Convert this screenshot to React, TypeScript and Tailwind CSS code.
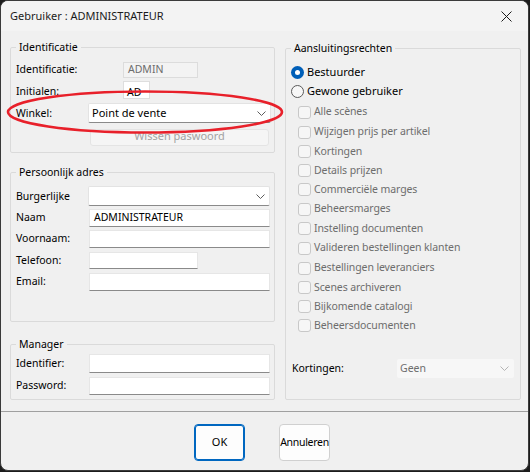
import React from "react";

const Chevron = ({ light }: { light?: boolean }) => (
	<svg width="9" height="5" viewBox="0 0 9 5" className={light ? "text-[#b4b4b4]" : "text-[#5c5c5c]"}>
		<path d="M0.5 0.5 L4.5 4.5 L8.5 0.5" fill="none" stroke="currentColor" strokeWidth="1" />
	</svg>
);

const TextBox = ({ cls, value }: { cls: string; value?: string }) => (
	<div className={`${cls} h-full bg-white border border-[#e6e6e6] border-b-[#8a8a8a] pl-[4px] flex items-center text-black`}>
		{value}
	</div>
);

const Combo = ({ cls, value }: { cls: string; value?: string }) => (
	<div className={`${cls} h-full bg-white border border-[#e3e3e3] border-b-[#8a8a8a] rounded-[2px] pl-[3px] pr-[4px] flex items-center justify-between text-black`}>
		<span className="text-[11px]">{value}</span>
		<Chevron />
	</div>
);

const Check = ({ label }: { label: string }) => (
	<div className="flex items-center gap-[3px] h-full">
		<div className="w-[13px] h-[13px] rounded-[3px] border border-[#c8c8c8] bg-[#f6f6f6]" />
		<span className="text-[#6d6d6d] tracking-[-0.1px]">{label}</span>
	</div>
);

const rights: [string, string][] = [
	["Alle scènes", "h-[20px]"],
	["Wijzigen prijs per artikel", "h-[20px]"],
	["Kortingen", "h-[19px]"],
	["Details prijzen", "h-[19px]"],
	["Commerciële marges", "h-[19px]"],
	["Beheersmarges", "h-[20px]"],
	["Instelling documenten", "h-[19px]"],
	["Valideren bestellingen klanten", "h-[20px]"],
	["Bestellingen leveranciers", "h-[20px]"],
	["Scenes archiveren", "h-[19px]"],
	["Bijkomende catalogi", "h-[19px]"],
	["Beheersdocumenten", "h-[19px]"],
];

const App = () => {
	return (
		<div className="relative w-[530px] h-[472px] bg-[#1c1c1c] font-['Noto_Sans',sans-serif] text-[10.5px] text-black">
			<div className="w-[529px] h-[471px] rounded-[8px] border border-[#3a3a3a] bg-[#f0f0f0] overflow-hidden flex flex-col">
				{/* title bar */}
				<header className="h-[30px] shrink-0 bg-[#f3f3f3] flex items-center justify-between pl-[9px] pr-[16px]">
					<span className="text-[11px] text-[#1b1b1b]">Gebruiker : ADMINISTRATEUR</span>
					<svg width="11" height="11" viewBox="0 0 11 11" className="mt-[1px]">
						<path d="M0.5 0.5 L10.5 10.5 M10.5 0.5 L0.5 10.5" stroke="#1b1b1b" strokeWidth="1" />
					</svg>
				</header>

				<div className="h-[380px] shrink-0 flex gap-[10px] pl-[9px] pt-[8px]">
					{/* left column */}
					<div className="w-[265px] flex flex-col">
						<fieldset className="h-[114px] border border-[#dadada] rounded-[2px]">
							<legend className="ml-[5px] px-[3px] leading-[16px]">Identificatie</legend>
							<div className="pl-[5px]">
								<div className="mt-[7px] h-[16px] flex items-center">
									<span className="w-[107px]">Identificatie:</span>
									<div className="w-[75px] h-full border border-[#dcdcdc] bg-[#f3f3f3] pl-[4px] flex items-center text-[#6d6d6d]">ADMIN</div>
								</div>
								<div className="mt-[3px] h-[18px] flex items-center">
									<span className="w-[107px] pt-[3px]">Initialen:</span>
									<div className="w-[27px] h-full bg-white border border-[#dedede] pl-[3px] overflow-hidden">
										<span className="block leading-[16px] mt-[2px]">AD</span>
									</div>
								</div>
								<div className="mt-[4px] h-[20px] flex items-center">
									<span className="w-[72px] pt-[2px]">Winkel:</span>
									<Combo cls="w-[183px]" value="Point de vente" />
								</div>
								<div className="mt-[6px] h-[17px] ml-[74px] w-[179px] border border-[#e4e4e4] rounded-[3px] bg-[#f5f5f5] overflow-hidden">
									<div className="mt-[2px] h-[13px] overflow-hidden text-center text-[#a3a3a3] text-[11px]">
										<span className="block leading-[16px] -mt-[4px]">Wissen paswoord</span>
									</div>
								</div>
							</div>
						</fieldset>

						<fieldset className="mt-[11px] h-[158px] border border-[#dadada] rounded-[2px]">
							<legend className="ml-[5px] px-[3px] leading-[16px]">Persoonlijk adres</legend>
							<div className="pl-[5px]">
								<div className="mt-[6px] h-[20px] flex items-center">
									<span className="w-[72px] pt-[2px]">Burgerlijke</span>
									<Combo cls="w-[182px]" />
								</div>
								<div className="mt-[3px] h-[18px] flex items-center">
									<span className="w-[73px]">Naam</span>
									<TextBox cls="w-[181px]" value="ADMINISTRATEUR" />
								</div>
								<div className="mt-[3px] h-[18px] flex items-center">
									<span className="w-[73px]">Voornaam:</span>
									<TextBox cls="w-[181px]" />
								</div>
								<div className="mt-[4px] h-[17px] flex items-center">
									<span className="w-[73px]">Telefoon:</span>
									<TextBox cls="w-[109px]" />
								</div>
								<div className="mt-[4px] h-[18px] flex items-center">
									<span className="w-[73px]">Email:</span>
									<TextBox cls="w-[181px]" />
								</div>
							</div>
						</fieldset>

						<fieldset className="mt-[14px] h-[64px] border border-[#dadada] rounded-[2px]">
							<legend className="ml-[5px] px-[3px] leading-[16px]">Manager</legend>
							<div className="pl-[5px]">
								<div className="mt-[2px] h-[19px] flex items-center">
									<span className="w-[73px]">Identifier:</span>
									<TextBox cls="w-[181px]" />
								</div>
								<div className="mt-[4px] h-[18px] flex items-center">
									<span className="w-[73px]">Password:</span>
									<TextBox cls="w-[181px]" />
								</div>
							</div>
						</fieldset>
					</div>

					{/* right column */}
					<fieldset className="mt-[1px] w-[236px] h-[360px] border border-[#dadada] rounded-[2px]">
						<legend className="ml-[5px] px-[3px] leading-[16px]">Aansluitingsrechten</legend>
						<div className="pl-[5px]">
							<div className="mt-[8px] h-[16px] flex items-center gap-[3px]">
								<div className="w-[13px] h-[13px] rounded-full bg-[#005fb8] flex items-center justify-center">
									<div className="w-[5px] h-[5px] rounded-full bg-white" />
								</div>
								<span className="text-[11px]">Bestuurder</span>
							</div>
							<div className="mt-[3px] h-[16px] flex items-center gap-[3px]">
								<div className="w-[13px] h-[13px] rounded-full border border-[#5a5a5a] bg-[#f7f7f7]" />
								<span className="text-[11px]">Gewone gebruiker</span>
							</div>
							<div className="mt-[3px] pl-[7px] flex flex-col">
								{rights.map(([label, h]) => (
									<div key={label} className={h}>
										<Check label={label} />
									</div>
								))}
							</div>
							<div className="mt-[24px] h-[19px] pl-[1px] flex items-center">
								<span className="w-[105px]">Kortingen:</span>
								<div className="w-[117px] h-full bg-[#f7f7f7] rounded-[2px] pl-[3px] pr-[5px] flex items-center justify-between text-[#6d6d6d]">
									<span>Geen</span>
									<Chevron light />
								</div>
							</div>
						</div>
					</fieldset>
				</div>

				{/* footer */}
				<footer className="flex-1 border-t border-[#a0a0a0] pt-[12px] pl-[193px] flex gap-[34px] items-start">
					<button className="w-[51px] h-[37px] rounded-[4px] border border-[#0067c0] shadow-[inset_0_0_0_1px_#0067c0] bg-[#fdfdfd] text-[11px]">OK</button>
					<button className="w-[51px] h-[37px] rounded-[4px] border border-[#d0d0d0] bg-[#fdfdfd] text-[10.5px] tracking-[-0.3px] whitespace-nowrap flex items-center justify-center">
						Annuleren
					</button>
				</footer>
			</div>

			<svg className="absolute left-0 top-0 pointer-events-none" width="530" height="472">
				<ellipse cx="145" cy="112" rx="137" ry="20.5" fill="none" stroke="#e8202a" strokeWidth="2.6" />
			</svg>
		</div>
	);
};

export default App;
